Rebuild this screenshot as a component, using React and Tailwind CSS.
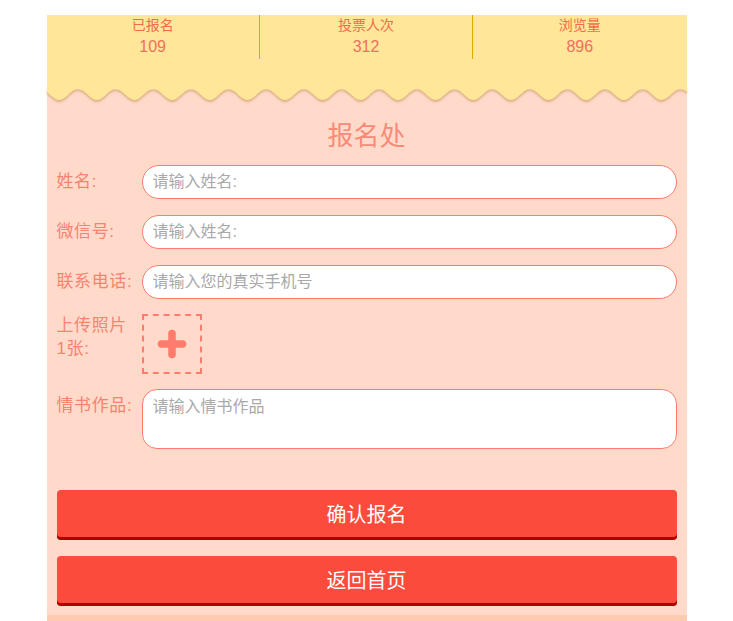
import React from "react";

const stats = [
  { label: "已报名", value: 109 },
  { label: "投票人次", value: 312 },
  { label: "浏览量", value: 896 },
];

// scalloped edge under the stats bar
const wavePath = () => {
  const w = 640;
  const period = 640 / 17;
  const pts = [];
  for (let x = 0; x <= w; x += 2) {
    const y = 7.5 - 5.5 * Math.cos((2 * Math.PI * (x - 31)) / period);
    pts.push(`${x},${y.toFixed(2)}`);
  }
  return `M0,0 L${pts.join(" L")} L${w},0 Z`;
};

const Field = ({ label, placeholder }) => (
  <div className="flex items-center">
    <label className="w-[85px] shrink-0 text-[17px] leading-[34px] tracking-[0.6px] text-[#f7836f]">{label}</label>
    <input
      className="h-[34px] flex-1 rounded-full border border-[#ff7b6b] bg-white px-[10px] text-[16px] text-gray-700 outline-none placeholder:text-[#a9a9a9]"
      placeholder={placeholder}
    />
  </div>
);

export default function App() {
  return (
    <div className="min-h-screen bg-white pt-[15px] font-['Liberation_Sans','Noto_Sans_CJK_SC',sans-serif]">
      <div className="mx-auto w-[640px] bg-[#ffdacb]">
        {/* stats */}
        <div className="bg-[#ffe698] pb-[29px]">
          <div className="grid grid-cols-3">
            {stats.map((s, i) => (
              <div
                key={s.label}
                className={`flex h-[44px] flex-col items-center ${i < 2 ? "border-r border-[#e0a800]" : ""}`}
              >
                <span className="text-[14px] leading-[20px] text-[#f26b4a]">{s.label}</span>
                <span className="text-[16px] leading-[24px] text-[#f07060]">{s.value}</span>
              </div>
            ))}
          </div>
        </div>
        <svg
          width="640"
          height="16"
          viewBox="0 0 640 16"
          className="-mt-px block drop-shadow-[0_2px_1px_rgba(190,140,70,0.55)]"
        >
          <path d={wavePath()} fill="#ffe698" />
        </svg>

        <h2 className="mt-[16px] text-center text-[26px] leading-[34px] text-[#f78b78]">报名处</h2>

        <div className="mt-[12px] flex flex-col gap-[16px] px-[10px]">
          <Field label="姓名:" placeholder="请输入姓名:" />
          <Field label="微信号:" placeholder="请输入姓名:" />
          <Field label="联系电话:" placeholder="请输入您的真实手机号" />
        </div>

        <div className="mt-[15px] flex items-start px-[10px]">
          <label className="w-[85px] shrink-0 text-[17px] leading-[23px] tracking-[0.6px] text-[#f7836f]">
            上传照片
            <br />
            1张:
          </label>
          <button className="flex h-[60px] w-[60px] items-center justify-center border-2 border-dashed border-[#ff7b6b]">
            <svg width="30" height="30" viewBox="0 0 30 30">
              <path d="M15 4.5 V25.5 M4.5 15 H25.5" stroke="#ff7b6b" strokeWidth="7.5" strokeLinecap="round" />
            </svg>
          </button>
        </div>

        <div className="mt-[15px] flex items-start px-[10px]">
          <label className="w-[85px] shrink-0 text-[17px] leading-[34px] tracking-[0.6px] text-[#f7836f]">情书作品:</label>
          <textarea
            className="h-[60px] flex-1 resize-none rounded-[15px] border border-[#ff7b6b] bg-white px-[10px] pt-[6px] text-[16px] leading-[22px] text-gray-700 outline-none placeholder:text-[#a9a9a9]"
            placeholder="请输入情书作品"
          />
        </div>

        <div className="mt-[41px] flex flex-col gap-[16px] px-[10px] pb-[9px]">
          <button className="h-[50px] rounded-[4px] bg-[#fb4b3d] text-[20px] text-white shadow-[inset_0_-3px_0_#b00000]">
            确认报名
          </button>
          <button className="h-[50px] rounded-[4px] bg-[#fb4b3d] text-[20px] text-white shadow-[inset_0_-3px_0_#b00000]">
            返回首页
          </button>
        </div>
        <div className="h-[10px] bg-[#ffcbae]" />
      </div>
    </div>
  );
}
